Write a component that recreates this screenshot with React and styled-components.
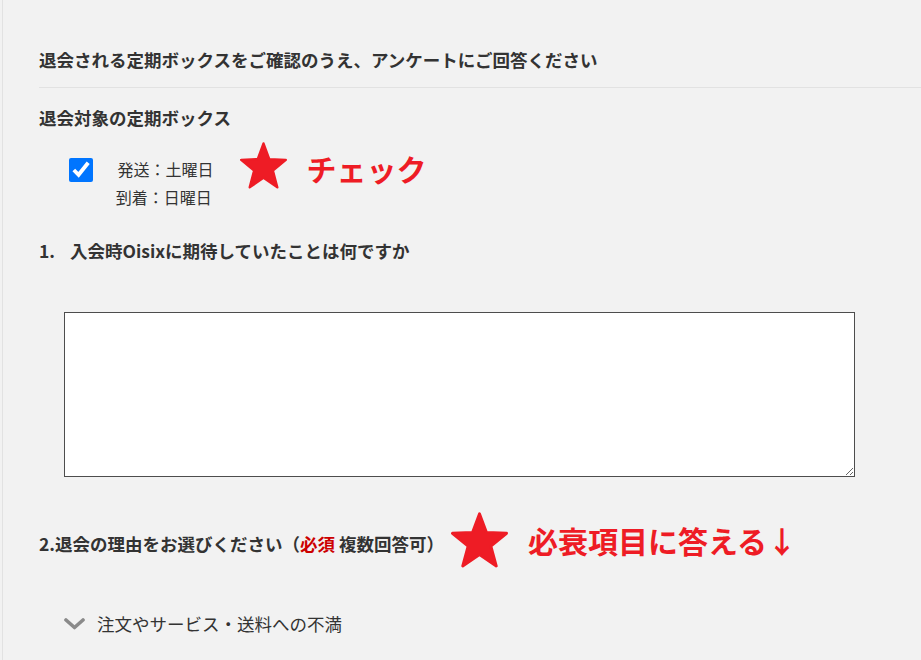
import React from 'react';
import styled, { createGlobalStyle } from 'styled-components';

const GlobalStyle = createGlobalStyle`
    html, body {
        margin: 0;
        padding: 0;
        background: #f2f2f2;
    }
    body {
        font-family: "Noto Sans CJK JP", "Noto Sans", sans-serif;
        color: #333;
    }
`;

const STAR_POINTS = '50,3 62.3,35 97.5,36.5 70,58.5 79.4,92.5 50,73 20.6,92.5 30,58.5 2.5,36.5 37.7,35';

function Star({ w, h, dy }) {
    return (
        <StarIcon width={w} height={h} $dy={dy} viewBox="0 0 100 96" preserveAspectRatio="none">
            <polygon points={STAR_POINTS} fill="#ee1c25" stroke="#ee1c25" strokeWidth="5" strokeLinejoin="round" />
        </StarIcon>
    );
}

function App() {
    return (
        <>
            <GlobalStyle />
            <Page>
                <Header>退会される定期ボックスをご確認のうえ、アンケートにご回答ください</Header>

                <SectionTitle>退会対象の定期ボックス</SectionTitle>
                <BoxRow>
                    <Check type="checkbox" defaultChecked />
                    <BoxInfo>
                        <span>&nbsp;発送：土曜日</span>
                        <span>到着：日曜日</span>
                    </BoxInfo>
                    <Note $gap={26} $lead={20}>
                        <Star w={47} h={47} dy={-13} />
                        <NoteText $dy={-11}>チェック</NoteText>
                    </Note>
                </BoxRow>

                <Question $top={27}><Num>1.</Num>入会時Oisixに期待していたことは何ですか</Question>
                <Answer />

                <QuestionRow>
                    <Question $top={8}>
                        2.退会の理由をお選びください（<Required>必須</Required> 複数回答可）
                    </Question>
                    <Note $gap={7} $lead={20}>
                        <Star w={57} h={56} dy={0} />
                        <NoteText $dy={0}>必衰項目に答える↓</NoteText>
                    </Note>
                </QuestionRow>

                <Reason>
                    <Chevron width="21" height="12" viewBox="0 0 21 12">
                        <polyline points="2,2 10.5,9.5 19,2" fill="none" stroke="#8a8a8a" strokeWidth="3.6" strokeLinecap="round" strokeLinejoin="round" />
                    </Chevron>
                    注文やサービス・送料への不満
                </Reason>
            </Page>
        </>
    );
}

const Page = styled.div`
    margin-left: 2px;
    min-height: 660px;
    box-sizing: border-box;
    border-left: 1px solid #e2e2e2;
    padding-left: 36px;
    overflow: hidden;
`;

const Header = styled.h2`
    margin: 0;
    padding: 47px 0 14px;
    border-bottom: 1px solid #e2e2e2;
    font-size: 17.5px;
    line-height: 26px;
    font-weight: 700;
`;

const SectionTitle = styled.h3`
    margin: 17px 0 0;
    font-size: 17.5px;
    line-height: 26px;
    font-weight: 700;
`;

const BoxRow = styled.div`
    display: flex;
    align-items: flex-start;
    margin-top: 24px;
    padding-left: 30px;
`;

const Check = styled.input`
    width: 24px;
    height: 24px;
    margin: 3px 0 0;
    accent-color: #0075ff;
`;

const BoxInfo = styled.div`
    display: flex;
    flex-direction: column;
    align-items: center;
    margin-left: 21px;
    font-size: 16px;
    line-height: 28px;
`;

const Note = styled.div`
    display: flex;
    align-items: center;
    gap: ${p => p.$lead}px;
    margin-left: ${p => p.$gap}px;
`;

const StarIcon = styled.svg`
    display: block;
    flex-shrink: 0;
    transform: translateY(${p => p.$dy}px);
`;

const NoteText = styled.span`
    color: #ee1c25;
    font-weight: 700;
    font-size: 30px;
    line-height: 1;
    white-space: nowrap;
    transform: translateY(${p => p.$dy}px);
`;

const Question = styled.h3`
    margin: ${p => p.$top}px 0 0;
    font-size: 17.5px;
    line-height: 26px;
    font-weight: 700;
    white-space: nowrap;
`;

const Num = styled.span`
    display: inline-block;
    width: 31px;
`;

const Required = styled.span`
    color: #cc0000;
`;

const Answer = styled.textarea`
    display: block;
    box-sizing: border-box;
    width: 791px;
    height: 165px;
    margin: 48px 0 0 25px;
    border: 1px solid #4d4d4d;
    border-radius: 0;
    background: #fff;
    resize: both;
`;

const QuestionRow = styled.div`
    display: flex;
    align-items: center;
    height: 56px;
    margin-top: 35px;
`;

const Reason = styled.div`
    display: flex;
    align-items: center;
    gap: 12px;
    margin: 43px 0 0 25px;
    font-size: 17.5px;
    line-height: 26px;
`;

const Chevron = styled.svg`
    display: block;
`;

export default App;
